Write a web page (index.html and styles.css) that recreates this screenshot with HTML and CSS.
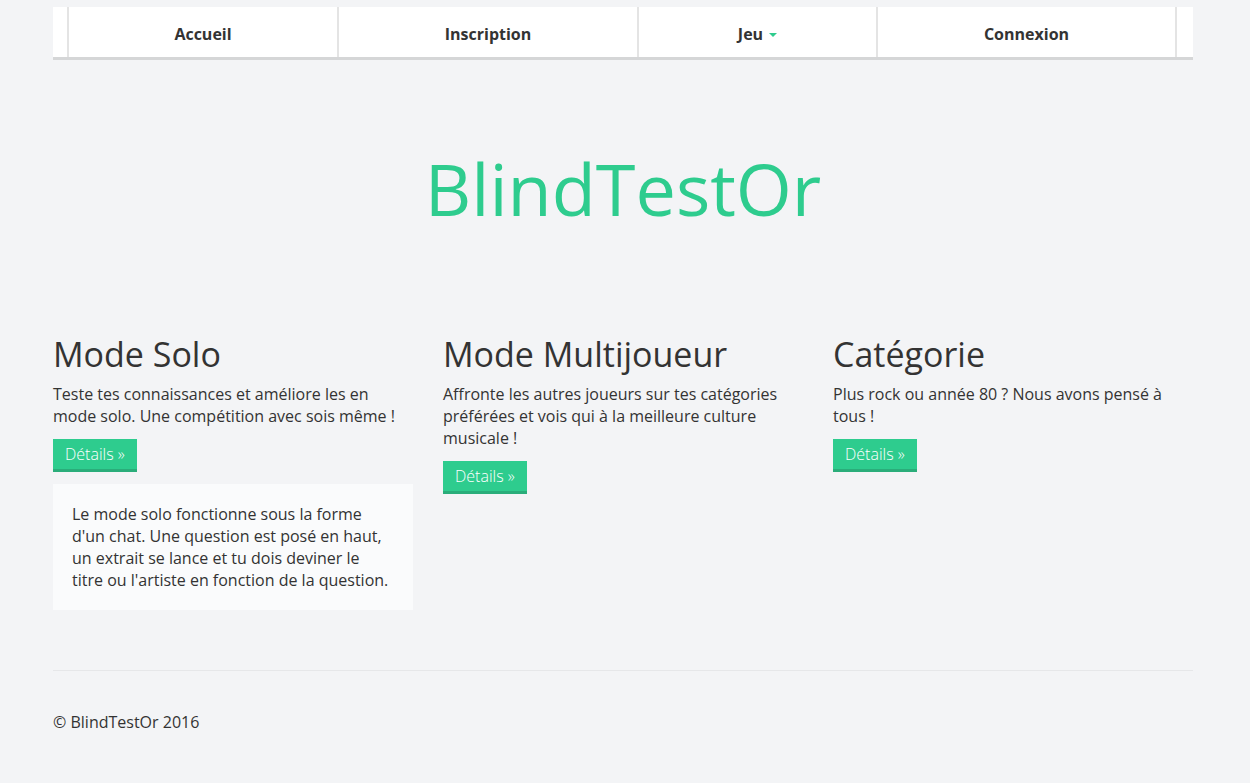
FILE: index.html
```html
<!DOCTYPE html>
<html lang="fr">
<head>
<meta charset="utf-8">
<title>BlindTestOr</title>
<link rel="stylesheet" href="styles.css">
</head>
<body>
<div class="container">
  <nav class="navbar">
    <div class="nav-cell nav-edge"></div>
    <a class="nav-cell nav-accueil" href="#">Accueil</a>
    <a class="nav-cell nav-inscription" href="#">Inscription</a>
    <a class="nav-cell nav-jeu" href="#">Jeu <span class="caret"></span></a>
    <a class="nav-cell nav-connexion" href="#">Connexion</a>
    <div class="nav-cell nav-edge nav-last"></div>
  </nav>

  <div class="jumbotron">
    <h1 class="brand">BlindTestOr</h1>
  </div>

  <div class="row">
    <div class="col">
      <h2>Mode Solo</h2>
      <p>Teste tes connaissances et améliore les en mode solo. Une compétition avec sois même !</p>
      <a class="btn" href="#">Détails »</a>
      <div class="well">
        <p>Le mode solo fonctionne sous la forme d'un chat. Une question est posé en haut, un extrait se lance et tu dois deviner le titre ou l'artiste en fonction de la question.</p>
      </div>
    </div>
    <div class="col">
      <h2>Mode Multijoueur</h2>
      <p>Affronte les autres joueurs sur tes catégories préférées et vois qui à la meilleure culture musicale !</p>
      <a class="btn" href="#">Détails »</a>
    </div>
    <div class="col">
      <h2>Catégorie</h2>
      <p>Plus rock ou année 80 ? Nous avons pensé à tous !</p>
      <a class="btn" href="#">Détails »</a>
    </div>
  </div>

  <hr class="divider">

  <footer class="footer">
    <p>© BlindTestOr 2016</p>
  </footer>
</div>
</body>
</html>
```

FILE: styles.css
```css
* { box-sizing: border-box; }

html, body {
  margin: 0;
  padding: 0;
}

body {
  background: #f3f4f6;
  color: #333333;
  font-family: "Open Sans", "Liberation Sans", sans-serif;
  font-size: 16px;
  line-height: 22px;
  padding-right: 4px;
}

.container {
  width: 1140px;
  margin: 0 auto;
}

.navbar {
  margin-top: 7px;
  display: grid;
  grid-template-columns: 16px 270px 300px 239px 299px 16px;
  height: 53px;
  background: #ffffff;
  border-bottom: 3px solid #d5d6d7;
}

.nav-cell {
  display: flex;
  align-items: center;
  justify-content: center;
  height: 50px;
  padding-top: 4px;
  border-right: 2px solid #e4e4e4;
  color: #333333;
  font-weight: 700;
  font-size: 16px;
  text-decoration: none;
}

.nav-last { border-right: none; }

.caret {
  display: inline-block;
  width: 0;
  height: 0;
  margin-left: 6px;
  margin-top: 2px;
  border-left: 4px solid transparent;
  border-right: 4px solid transparent;
  border-top: 4px solid #2ecc8e;
}

.jumbotron {
  padding: 89px 0 0;
  height: 270px;
  text-align: center;
}

.brand {
  margin: 0;
  font-size: 72px;
  line-height: 79px;
  font-weight: 400;
  color: #2ecc8e;
}

.row {
  display: grid;
  grid-template-columns: 360px 360px 360px;
  column-gap: 30px;
  align-items: start;
}

.col h2 {
  margin: 6px 0 10px;
  font-size: 34px;
  line-height: 37px;
  font-weight: 400;
  color: #333333;
}

.col p {
  margin: 0 0 12px;
}

.btn {
  display: inline-block;
  background: #2ecc8e;
  color: #ffffff;
  font-size: 16px;
  font-weight: 300;
  line-height: 18px;
  padding: 6px 12px;
  border-bottom: 3px solid #2aad7a;
  text-decoration: none;
}

.well {
  margin-top: 12px;
  background: #fafbfc;
  padding: 19px;
}

.well p { margin: 0; }

.divider {
  margin: 60px 0 0;
  border: 0;
  border-top: 1px solid #e6e7e9;
}

.footer p {
  margin: 40px 0 0;
}
```
